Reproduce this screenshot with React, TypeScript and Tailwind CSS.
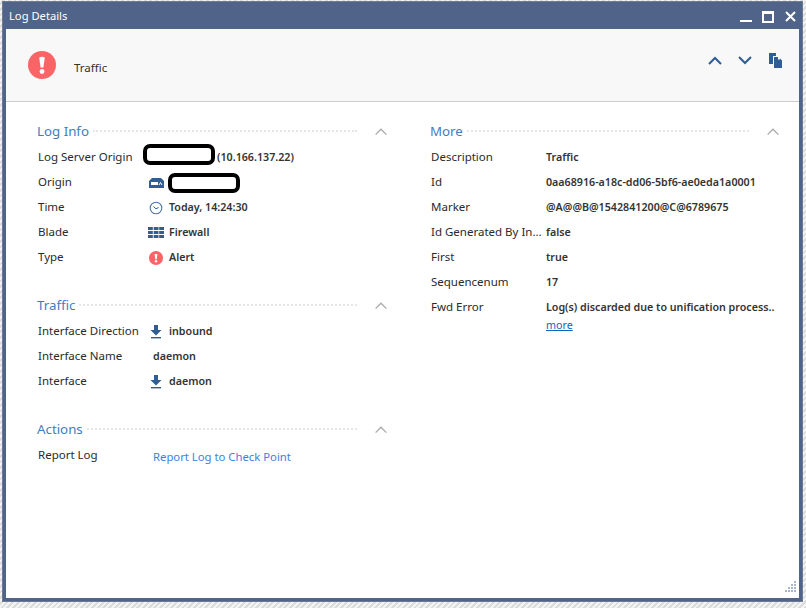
import React from "react";

const Chevron = ({ dir = "up", className = "", w = 2 }: { dir?: "up" | "down"; className?: string; w?: number }) => (
  <svg width="14" height="9" viewBox="0 0 14 9" className={className} fill="none">
    <path d={dir === "up" ? "M1 8 L7 2 L13 8" : "M1 1 L7 7 L13 1"} stroke="currentColor" strokeWidth={w} />
  </svg>
);

const Alert = ({ size }: { size: number }) => (
  <svg width={size} height={size} viewBox="0 0 28 28" className="shrink-0">
    <circle cx="14" cy="14" r="14" fill="#fb6467" />
    <path d="M11.2 6.5 Q14 5 16.8 6.5 L15.4 16.5 H12.6 Z" fill="#fff" />
    <circle cx="14" cy="20.5" r="2.4" fill="#fff" />
  </svg>
);

const Down = () => (
  <svg width="12" height="14" viewBox="0 0 12 14" className="shrink-0">
    <path d="M4 0 H8 V5 H11.5 L6 10.5 L0.5 5 H4 Z" fill="#2f5d94" />
    <rect x="1" y="12" width="10" height="1.4" fill="#2f5d94" />
  </svg>
);

const Gateway = () => (
  <svg width="15" height="10" viewBox="0 0 15 10" className="shrink-0">
    <path d="M3 0 H12 L15 3 V10 H0 V3 Z" fill="#2f5d94" />
    <rect x="2" y="4" width="7" height="3" fill="#fff" />
    <path d="M10 7 L11.5 4.5 L13 7" stroke="#fff" fill="none" />
  </svg>
);

const Clock = () => (
  <svg width="14" height="14" viewBox="0 0 14 14" className="shrink-0" fill="none">
    <circle cx="7" cy="7" r="5.8" stroke="#4a76a8" strokeWidth="1.1" />
    <path d="M4.5 5.5 L7 7.8 L9.5 6.5" stroke="#2f5d94" strokeWidth="1" />
  </svg>
);

const Blade = () => (
  <svg width="16" height="11" viewBox="0 0 16 11" className="shrink-0" fill="#2f5d94">
    {[0, 4, 8].map((y) =>
      [0, 5.7, 11.2].map((x) => <rect key={`${x}-${y}`} x={x} y={y} width="4.8" height="3" />)
    )}
  </svg>
);

const Copy = () => (
  <svg width="13" height="15" viewBox="0 0 13 15" fill="#2f5d94">
    <path d="M0 0 H7 V3 H4 V11 H0 Z" />
    <path d="M5 4 H9 V6.5 H11 V5.5 L13 7.5 V15 H5 Z" />
  </svg>
);

const Redact = ({ className = "" }: { className?: string }) => (
  <span className={`inline-block border-[4px] border-black rounded-[7px] bg-white shrink-0 ${className}`} />
);

const SectionHead = ({ title, className = "" }: { title: string; className?: string }) => (
  <div className={`flex items-center h-[20px] ${className}`}>
    <span className="text-[13.3px] leading-[20px] text-[#3f7cc4] mr-[4px]">{title}</span>
    <span className="flex-1 border-t-2 border-dotted border-[#e6e6e6] h-0" />
    <Chevron w={1.4} className="ml-[17px] text-[#a9a9a9] scale-[0.9]" />
  </div>
);

const Row = ({ label, children }: { label: string; children: React.ReactNode }) => (
  <div className="flex items-center h-[25px]">
    <span className="w-[116px] shrink-0 text-[11.5px] text-[#2a2a2a] pl-[1px] whitespace-nowrap">{label}</span>
    <div className="flex items-center text-[10.7px] leading-[15px] font-semibold text-[#333333] whitespace-nowrap mt-[2px]">{children}</div>
  </div>
);

const IconSlot = ({ children }: { children: React.ReactNode }) => (
  <span className="w-[16px] -ml-[5px] mr-[5px] flex items-center justify-center shrink-0">{children}</span>
);

export default function App() {
  return (
    <div
      className="w-[806px] h-[608px] overflow-hidden pt-[2px] pl-[3px] bg-[#e9e9e9] bg-[repeating-linear-gradient(135deg,#f4f4f4_0px,#f4f4f4_2px,#dcdcdc_2px,#dcdcdc_4px)]"
      style={{ fontFamily: '"Noto Sans", "Open Sans", Arial, sans-serif' }}
    >
      <div className="w-[799px] h-[599px] flex flex-col border-[3px] border-t-0 border-[#4f6488] outline outline-1 outline-[#6d7a8f] bg-white">
        {/* Title bar */}
        <div className="h-[27px] bg-[#4f6488] flex items-center justify-between shrink-0 pt-[2px]">
          <span className="text-white text-[11.2px] pl-[3px]">Log Details</span>
          <div className="flex items-center pr-[3px] text-white">
            <span className="w-[12px] h-[2px] bg-white mt-[9px]" />
            <span className="w-[12px] h-[12px] ml-[10px] border-2 border-t-[3px] border-white" />
            <svg width="11" height="11" viewBox="0 0 11 11" className="ml-[11px]">
              <path d="M1 1 L10 10 M10 1 L1 10" stroke="#fff" strokeWidth="2" />
            </svg>
          </div>
        </div>

        {/* Header */}
        <div className="h-[73px] shrink-0 bg-[#f8f8f8] border-b border-[#cccccc] flex items-center pl-[22px] pr-[17px] text-[#333333]">
          <Alert size={28} />
          <span className="ml-[18px] text-[11.5px] mt-[6px] text-[#333]">Traffic</span>
          <div className="ml-auto flex items-center text-[#2f5d94] mb-[9px]">
            <Chevron />
            <Chevron dir="down" className="ml-[16px]" />
            <span className="ml-[17px] flex"><Copy /></span>
          </div>
        </div>

        {/* Body */}
        <div className="flex-1 flex relative pl-[31px] pt-[19px]">
          <div className="w-[351px]">
            <section className="h-[174px]">
              <SectionHead title="Log Info" />
              <div className="mt-[3px]">
                <Row label="Log Server Origin">
                  <Redact className="w-[72px] h-[21px] -ml-[10px] -mt-[7px]" />
                  <span className="text-[#333] ml-[2px]">(10.166.137.22)</span>
                </Row>
                <Row label="Origin">
                  <IconSlot><Gateway /></IconSlot>
                  <Redact className="w-[72px] h-[20px] -ml-[1px]" />
                </Row>
                <Row label="Time"><IconSlot><Clock /></IconSlot>Today, 14:24:30</Row>
                <Row label="Blade"><IconSlot><Blade /></IconSlot>Firewall</Row>
                <Row label="Type"><IconSlot><Alert size={14} /></IconSlot>Alert</Row>
              </div>
            </section>
            <section className="h-[124px]">
              <SectionHead title="Traffic" />
              <div className="mt-[3px]">
                <Row label="Interface Direction"><IconSlot><Down /></IconSlot>inbound</Row>
                <Row label="Interface Name">daemon</Row>
                <Row label="Interface"><IconSlot><Down /></IconSlot>daemon</Row>
              </div>
            </section>
            <section>
              <SectionHead title="Actions" />
              <div className="flex items-center h-[25px] mt-[3px]">
                <span className="w-[116px] shrink-0 text-[11.5px] text-[#2a2a2a] pl-[1px]">Report Log</span>
                <span className="text-[#3d7fe0] mt-[6px] text-[11.3px]">Report Log to Check Point</span>
              </div>
            </section>
          </div>
          <div className="w-[350px] ml-[42px]">
            <SectionHead title="More" />
            <div className="mt-[3px]">
              <Row label="Description">Traffic</Row>
              <Row label="Id">0aa68916-a18c-dd06-5bf6-ae0eda1a0001</Row>
              <Row label="Marker">@A@@B@1542841200@C@6789675</Row>
              <Row label="Id Generated By In...">false</Row>
              <Row label="First">true</Row>
              <Row label="Sequencenum">17</Row>
              <Row label="Fwd Error">Log(s) discarded due to unification process..</Row>
              <div className="pl-[116px] -mt-[1px] text-[10.7px] leading-[14px]">
                <a className="text-[#0b66c3] underline">more</a>
              </div>
            </div>
          </div>
          <svg width="14" height="14" viewBox="0 0 14 14" className="absolute right-[2px] bottom-[3px]" fill="#a9b6cc">
            {[[11, 0], [8, 3], [11, 3], [5, 6], [8, 6], [11, 6], [2, 9], [5, 9], [8, 9], [11, 9]].map(([x, y]) => (
              <rect key={`${x}-${y}`} x={x} y={y} width="2" height="2" />
            ))}
          </svg>
        </div>
      </div>
    </div>
  );
}
